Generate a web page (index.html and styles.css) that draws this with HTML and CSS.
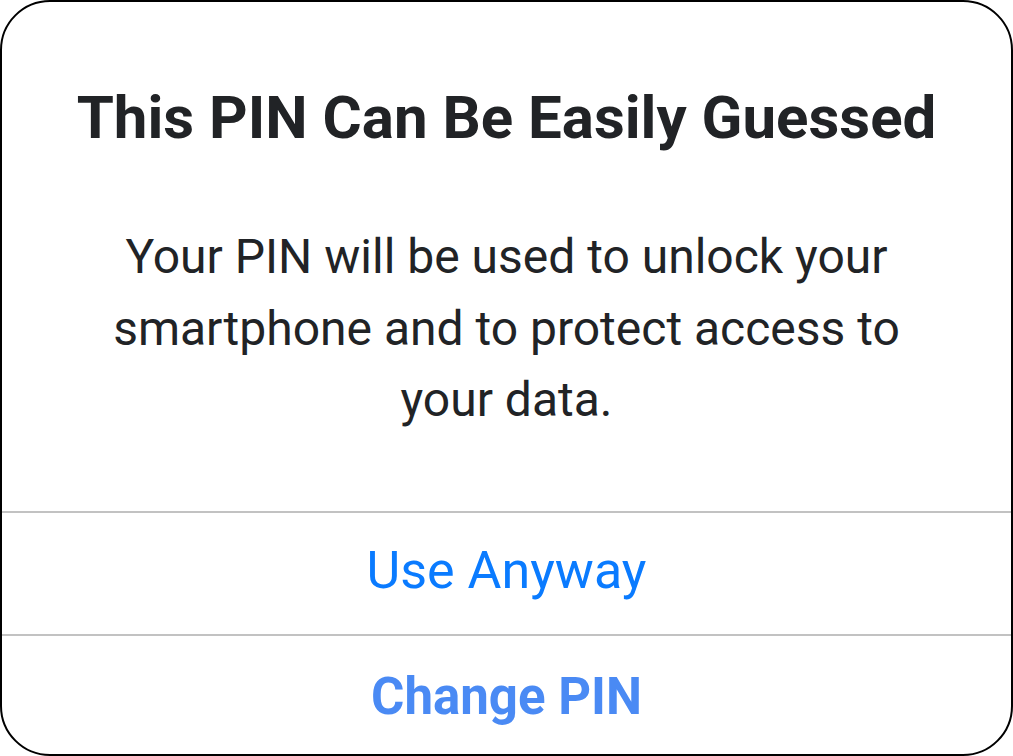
FILE: index.html
```html
<!DOCTYPE html>
<html lang="en">
<head>
<meta charset="utf-8">
<title>This PIN Can Be Easily Guessed</title>
<link rel="stylesheet" href="styles.css">
</head>
<body>
<div class="dialog">
  <div class="content">
    <h1 class="title">This PIN Can Be Easily Guessed</h1>
    <p class="message">Your PIN will be used to unlock your smartphone and to protect access to your data.</p>
  </div>
  <div class="actions">
    <button class="action action-primary">Use Anyway</button>
    <button class="action action-bold">Change PIN</button>
  </div>
</div>
</body>
</html>
```
FILE: styles.css
```css
html, body {
  margin: 0;
  padding: 0;
  background: #ffffff;
}
body {
  font-family: Roboto, "Liberation Sans", Arial, sans-serif;
}
.dialog {
  width: 1013px;
  height: 756px;
  box-sizing: border-box;
  border: 2px solid #000000;
  border-radius: 50px;
  background: #ffffff;
  overflow: hidden;
  display: flex;
  flex-direction: column;
}
.content {
  padding: 80px 40px 75px;
  text-align: center;
}
.title {
  margin: 0;
  font-size: 60px;
  line-height: 72px;
  font-weight: 700;
  color: #212326;
}
.message {
  margin: 67px auto 0;
  max-width: 800px;
  font-size: 48px;
  line-height: 71.5px;
  font-weight: 400;
  color: #212326;
}
.actions {
  display: flex;
  flex-direction: column;
}
.action {
  display: block;
  width: 100%;
  border: 0;
  border-top: 2px solid #c2c2c2;
  background: transparent;
  font-family: inherit;
  text-align: center;
  margin: 0;
  line-height: 56px;
  cursor: pointer;
}
.action-primary {
  padding: 30px 0 35px;
  font-size: 52px;
  font-weight: 400;
  color: #0a7bff;
}
.action-bold {
  padding: 33px 0 0;
  font-size: 51px;
  font-weight: 700;
  color: #4a8af4;
}
```
